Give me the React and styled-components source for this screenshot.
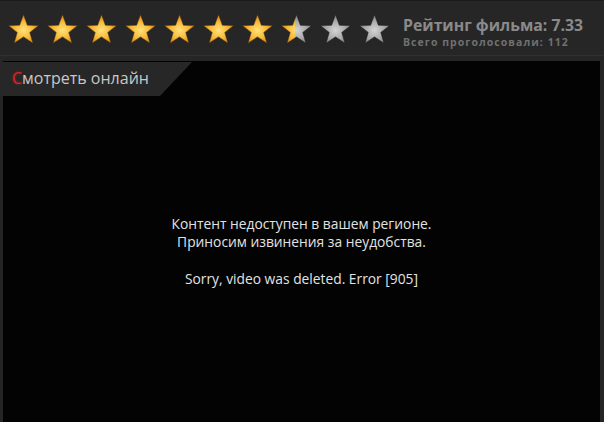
import React from 'react';
import styled, { createGlobalStyle } from 'styled-components';

const GlobalStyle = createGlobalStyle`
    html, body {
        margin: 0;
        padding: 0;
        background: #242424;
    }
    body {
        font-family: "Open Sans", "DejaVu Sans", sans-serif;
    }
`;

const Page = styled.div`
    width: 604px;
    height: 422px;
    overflow: hidden;
    background: #252525;
    border-top: 1px solid #1a1a1a;
    box-sizing: border-box;
    display: flex;
    flex-direction: column;
    position: relative;
`;

const RatingBar = styled.div`
    height: 55px;
    display: flex;
    align-items: center;
    padding-left: 7px;
    border-bottom: 1px solid #303030;
    background: #262626;
    box-sizing: border-box;
`;

const Stars = styled.div`
    display: flex;
    gap: 6px;
    margin-top: 2px;
`;

const Info = styled.div`
    margin-left: 12px;
    display: flex;
    flex-direction: column;
    gap: 2px;
    margin-top: 7px;
`;

const Title = styled.div`
    font-size: 15.8px;
    font-weight: 700;
    color: #8a8a8a;
    line-height: 18px;
`;

const Votes = styled.div`
    font-size: 10.5px;
    font-weight: 700;
    color: #707070;
    line-height: 12px;
    letter-spacing: 1.05px;
`;

const Gap = styled.div`
    height: 5px;
    background: #262626;
`;

const Player = styled.div`
    flex: 1;
    margin: 0 4px 0 3px;
    background: #030303;
    padding-top: 154px;
    text-align: center;
    color: #e2e2e2;
    font-size: 13.8px;
    line-height: 18px;
`;

const Spacer = styled.div`
    height: 19px;
`;

const Tab = styled.div`
    position: absolute;
    left: 0;
    top: 61px;
    width: 192px;
    height: 34px;
    background: #272727;
    clip-path: polygon(0 0, 192px 0, 160px 100%, 0 100%);
    display: flex;
    align-items: center;
    padding-left: 12px;
    box-sizing: border-box;
    font-size: 16px;
    color: #c8c8c8;
    padding-bottom: 2px;
`;

const Red = styled.span`
    color: #d8262b;
    text-shadow: 0 0 3px rgba(220, 40, 40, 0.6);
`;

const STAR = 'M16.5 1.5 L20.4 12.2 L31.8 12.5 L22.8 19.4 L26 30.3 L16.5 23.9 L7 30.3 L10.2 19.4 L1.2 12.5 L12.6 12.2 Z';

const Star = ({ fill, id }) => (
    <svg width="33" height="32" viewBox="0 0 33 32">
        <defs>
            <radialGradient id={`g${id}`} cx="50%" cy="55%" r="55%">
                <stop offset="0%" stopColor="#ffe27a" />
                <stop offset="55%" stopColor="#f8b836" />
                <stop offset="100%" stopColor="#d87d10" />
            </radialGradient>
            <radialGradient id={`s${id}`} cx="50%" cy="55%" r="55%">
                <stop offset="0%" stopColor="#d4d4d4" />
                <stop offset="60%" stopColor="#a8a8a8" />
                <stop offset="100%" stopColor="#7a7a7a" />
            </radialGradient>
            <clipPath id={`c${id}`}>
                <rect x="0" y="0" width={33 * fill} height="32" />
            </clipPath>
        </defs>
        <path d={STAR} fill={`url(#s${id})`} stroke="#1c1c1c" strokeWidth="0.6" />
        {fill > 0 && (
            <path
                d={STAR}
                fill={`url(#g${id})`}
                stroke="#3a2a10"
                strokeWidth="0.6"
                clipPath={`url(#c${id})`}
            />
        )}
    </svg>
);

const fills = [1, 1, 1, 1, 1, 1, 1, 0.46, 0, 0];

const App = () => (
    <>
        <GlobalStyle />
        <Page>
            <RatingBar>
                <Stars>
                    {fills.map((f, i) => (
                        <Star key={i} id={i} fill={f} />
                    ))}
                </Stars>
                <Info>
                    <Title>Рейтинг фильма: 7.33</Title>
                    <Votes>Всего проголосовали: 112</Votes>
                </Info>
            </RatingBar>
            <Gap />
            <Player>
                <div>Контент недоступен в вашем регионе.</div>
                <div>Приносим извинения за неудобства.</div>
                <Spacer />
                <div>Sorry, video was deleted. Error [905]</div>
            </Player>
            <Tab>
                <span>
                    <Red>С</Red>мотреть онлайн
                </span>
            </Tab>
        </Page>
    </>
);

export default App;
